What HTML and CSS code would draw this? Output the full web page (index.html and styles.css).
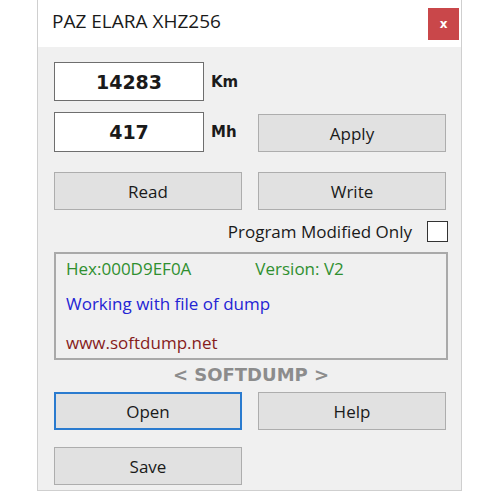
FILE: index.html
```html
<!DOCTYPE html>
<html lang="en">
<head>
  <meta charset="UTF-8">
  <title>PAZ ELARA XHZ256</title>
  <link rel="stylesheet" href="styles.css">
</head>
<body>
  <div class="window">
    <header class="titlebar">
      <span class="title">PAZ ELARA XHZ256</span>
      <button class="close">x</button>
    </header>
    <main class="content">
      <div class="grid">
        <div class="field">
          <input class="value" type="text" value="14283">
          <span class="unit">Km</span>
        </div>
        <div></div>

        <div class="field row2">
          <input class="value" type="text" value="417">
          <span class="unit">Mh</span>
        </div>
        <button class="btn apply">Apply</button>

        <button class="btn row3">Read</button>
        <button class="btn row3">Write</button>
      </div>

      <label class="option">
        <span>Program Modified Only</span>
        <span class="check"></span>
      </label>

      <div class="info">
        <div class="line green"><span>Hex:000D9EF0A</span><span class="version">Version: V2</span></div>
        <div class="line blue">Working with file of dump</div>
        <div class="line red">www.softdump.net</div>
      </div>

      <div class="brand">&lt; SOFTDUMP &gt;</div>

      <div class="grid bottom">
        <button class="btn focused">Open</button>
        <button class="btn">Help</button>
        <button class="btn save">Save</button>
      </div>
    </main>
  </div>
</body>
</html>
```

FILE: styles.css
```css
body {
  margin: 0;
  background: #fff;
  font-family: "Open Sans", "Noto Sans", sans-serif;
  color: #1a1a1a;
}
.window {
  margin-left: 37px;
  width: 423px;
  height: 490px;
  background: #f0f0f0;
  border: 1px solid #cfcfcf;
  border-top: none;
}
.titlebar {
  height: 47px;
  background: #fff;
  display: flex;
  align-items: center;
  justify-content: space-between;
  padding: 0 2px 0 14px;
}
.title {
  font-size: 19px;
  margin-top: -5px;
}
.close {
  width: 31px;
  height: 32px;
  margin-top: 1px;
  background: #c9474a;
  border: none;
  color: #fff;
  font-family: "DejaVu Sans", sans-serif;
  font-weight: bold;
  font-size: 12px;
}
.content {
  padding: 15px 0 0 16px;
}
.grid {
  display: grid;
  grid-template-columns: 188px 188px;
  column-gap: 16px;
}
.field {
  display: flex;
  align-items: center;
  height: 39px;
}
.field.row2 {
  margin-top: 11px;
  height: 40px;
}
.value {
  box-sizing: content-box;
  padding: 0;
  border: 1px solid #6e6e6e;
  width: 148px;
  height: 37px;
  background: #fff;
  text-align: center;
  font-family: "DejaVu Sans", sans-serif;
  font-weight: bold;
  font-size: 19px;
  color: #1a1a1a;
}
.row2 .value {
  height: 38px;
}
.unit {
  margin-left: 7px;
  font-family: "DejaVu Sans", sans-serif;
  font-weight: bold;
  font-size: 15px;
}
.btn {
  height: 38px;
  background: #e1e1e1;
  border: 1px solid #adadad;
  font-family: "Open Sans", "Noto Sans", sans-serif;
  font-size: 17px;
  color: #1a1a1a;
  padding: 0;
}
.apply {
  margin-top: 13px;
}
.row3 {
  margin-top: 20px;
}
.option {
  display: flex;
  justify-content: flex-end;
  align-items: center;
  gap: 15px;
  width: 394px;
  margin-top: 11px;
  height: 21px;
  font-size: 17px;
}
.check {
  width: 19px;
  height: 19px;
  border: 1px solid #333;
  background: #fff;
}
.info {
  margin-top: 10px;
  border: 2px solid #a9a9a9;
  padding-left: 10px;
  box-sizing: border-box;
  width: 394px;
  height: 108px;
  font-size: 17px;
}
.line {
  height: 36px;
  line-height: 30px;
}
.blue {
  line-height: 28px;
}
.red {
  line-height: 34px;
}
.green {
  color: #2f8f2f;
}
.version {
  margin-left: 64px;
}
.blue {
  color: #2424d4;
}
.red {
  color: #861c1c;
}
.brand {
  width: 394px;
  height: 32px;
  text-align: center;
  line-height: 30px;
  font-family: "DejaVu Sans", sans-serif;
  font-weight: bold;
  font-size: 18px;
  color: #8c8c8c;
}
.bottom {
  row-gap: 17px;
}
.focused {
  border: 2px solid #2a7bcf;
}
.save {
  grid-column: 1;
}
```
